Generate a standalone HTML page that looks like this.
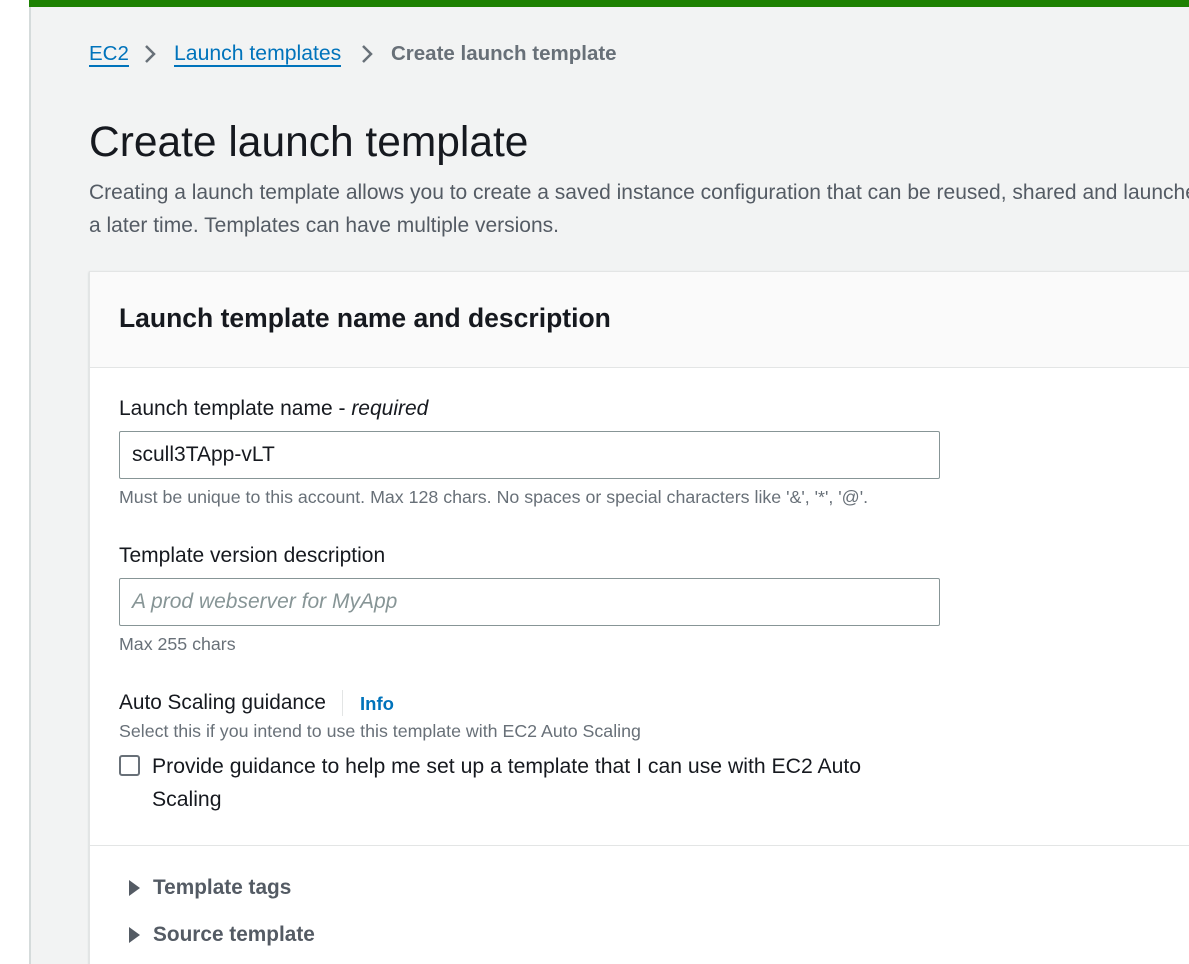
<!DOCTYPE html>
<html style="overflow:hidden"><head><style>
*{margin:0;padding:0;box-sizing:border-box}
html,body{width:1189px;height:964px;overflow:hidden}
body{background:#fff;font-family:"Liberation Sans",sans-serif;position:relative}
.page{position:absolute;left:29px;top:0;right:0;bottom:0;background:#f2f3f3;border-left:2px solid #d5dbdb}
.green{position:absolute;left:29px;top:0;right:0;height:7px;background:#1d8102}
.t{position:absolute;white-space:nowrap}
a{color:#0073bb;text-decoration:none;border-bottom:2px solid #0073bb}
.card{position:absolute;left:89px;top:271px;width:1110px;height:700px;background:#fff;border:1px solid #e3e5e5;box-shadow:0 1px 2px rgba(0,28,36,.2)}
.hdr{position:absolute;left:0;top:0;right:0;height:96px;background:#fafafa;border-bottom:1px solid #e3e5e5}
.inp{position:absolute;left:119px;width:821px;height:48px;border:1px solid #879596;border-radius:2px;background:#fff}
</style></head><body>
<div class="page"></div>
<div class="green"></div>
<div class="t" style="left:89px;top:41px;font-size:20.5px;line-height:26px"><a>EC2</a></div>
<svg class="t" style="left:141px;top:43px" width="18" height="22"><path d="M5 3l8 8-8 8" fill="none" stroke="#687078" stroke-width="2.5"/></svg>
<div class="t" style="left:174px;top:41px;font-size:21.2px;line-height:26px"><a>Launch templates</a></div>
<svg class="t" style="left:358px;top:43px" width="18" height="22"><path d="M5 3l8 8-8 8" fill="none" stroke="#687078" stroke-width="2.5"/></svg>
<div class="t" style="left:391px;top:41px;font-size:20.5px;line-height:26px;color:#687078;font-weight:bold">Create launch template</div>
<div class="t" style="left:89px;top:118px;font-size:42.5px;line-height:50px;color:#16191f">Create launch template</div>
<div class="t" style="left:89px;top:176px;font-size:21px;line-height:33px;color:#545b64">Creating a launch template allows you to create a saved instance configuration that can be reused, shared and launched at<br>a later time. Templates can have multiple versions.</div>
<div class="card"><div class="hdr"></div></div>
<div class="t" style="left:119px;top:302px;font-size:26.5px;line-height:32px;font-weight:bold;color:#16191f">Launch template name and description</div>
<div class="t" style="left:119px;top:396px;font-size:21px;line-height:26px;color:#16191f">Launch template name - <i>required</i></div>
<div class="inp" style="top:431px"></div>
<div class="t" style="left:132px;top:442px;font-size:21px;line-height:26px;color:#16191f">scull3TApp-vLT</div>
<div class="t" style="left:119px;top:486px;font-size:17.8px;line-height:22px;color:#687078">Must be unique to this account. Max 128 chars. No spaces or special characters like '&amp;', '*', '@'.</div>
<div class="t" style="left:119px;top:543px;font-size:21px;line-height:26px;color:#16191f">Template version description</div>
<div class="inp" style="top:578px"></div>
<div class="t" style="left:132px;top:589px;font-size:21px;line-height:26px;color:#879596;font-style:italic">A prod webserver for MyApp</div>
<div class="t" style="left:119px;top:633px;font-size:17.8px;line-height:22px;color:#687078">Max 255 chars</div>
<div class="t" style="left:119px;top:690px;font-size:20.8px;line-height:26px;color:#16191f">Auto Scaling guidance</div>
<div class="t" style="left:342px;top:690px;width:1px;height:26px;background:#e3e5e5"></div>
<div class="t" style="left:360px;top:691px;font-size:18.5px;line-height:26px;color:#0073bb;font-weight:bold">Info</div>
<div class="t" style="left:119px;top:720px;font-size:17.8px;line-height:22px;color:#687078">Select this if you intend to use this template with EC2 Auto Scaling</div>
<div class="t" style="left:119px;top:755px;width:21px;height:21px;border:2px solid #687078;border-radius:3px"></div>
<div class="t" style="left:152px;top:750px;font-size:21.2px;line-height:33px;color:#16191f">Provide guidance to help me set up a template that I can use with EC2 Auto<br>Scaling</div>
<div class="t" style="left:89px;top:845px;width:1110px;height:1px;background:#e3e5e5"></div>
<svg class="t" style="left:128px;top:879px" width="14" height="18"><path d="M1 1l11 8-11 8z" fill="#545b64"/></svg>
<div class="t" style="left:153px;top:875px;font-size:20.8px;line-height:26px;font-weight:bold;color:#545b64">Template tags</div>
<svg class="t" style="left:128px;top:926px" width="14" height="18"><path d="M1 1l11 8-11 8z" fill="#545b64"/></svg>
<div class="t" style="left:153px;top:922px;font-size:20.8px;line-height:26px;font-weight:bold;color:#545b64">Source template</div>
</body></html>
